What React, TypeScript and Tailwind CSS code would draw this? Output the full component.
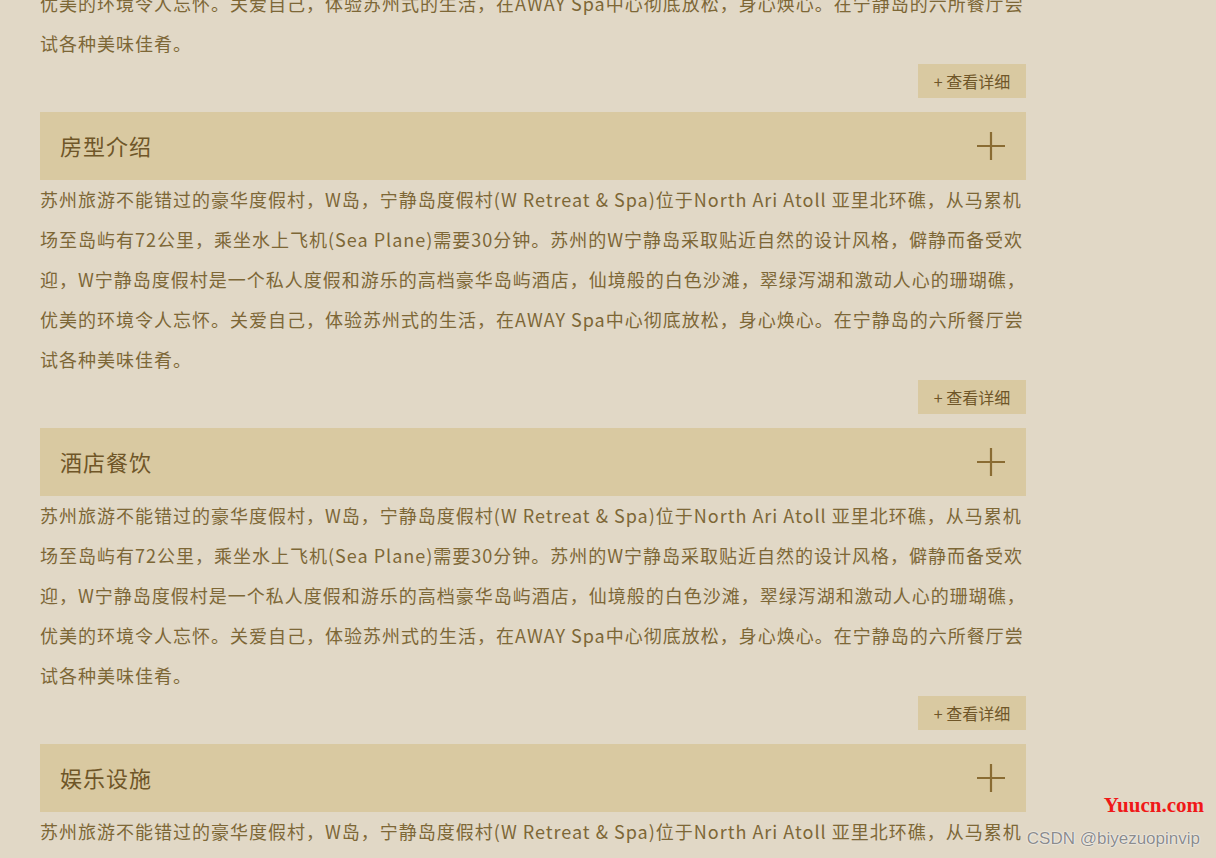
import React from "react";

const intro =
  "苏州旅游不能错过的豪华度假村，W岛，宁静岛度假村(W Retreat & Spa)位于North Ari Atoll 亚里北环礁，从马累机场至岛屿有72公里，乘坐水上飞机(Sea Plane)需要30分钟。苏州的W宁静岛采取贴近自然的设计风格，僻静而备受欢迎，W宁静岛度假村是一个私人度假和游乐的高档豪华岛屿酒店，仙境般的白色沙滩，翠绿泻湖和激动人心的珊瑚礁，优美的环境令人忘怀。关爱自己，体验苏州式的生活，在AWAY Spa中心彻底放松，身心焕心。在宁静岛的六所餐厅尝试各种美味佳肴。";

const sections = ["酒店介绍", "房型介绍", "酒店餐饮", "娱乐设施"];

function PlusIcon() {
  return (
    <svg width="30" height="30" viewBox="0 0 30 30" className="shrink-0">
      <path d="M1 15H29M15 1V29" stroke="#8a6c33" strokeWidth="2.2" fill="none" />
    </svg>
  );
}

function Section({ title }: { title: string }) {
  return (
    <div className="mb-[14px]">
      {/* Header */}
      <div className="h-[68px] bg-[#d9c9a1] flex items-center justify-between pl-5 pr-[20px]">
        <h2 className="text-[22px] leading-none tracking-[1px] text-[#6f5628] mb-[3px]">{title}</h2>
        <PlusIcon />
      </div>

      {/* Body */}
      <p className="text-[18px] leading-[40px] tracking-[1px] text-[#7d6736] -mt-px mb-px">{intro}</p>

      <div className="flex justify-end">
        <button className="h-[34px] w-[108px] bg-[#d9c9a1] text-[16px] text-[#6f5628] flex items-center justify-center">
          + 查看详细
        </button>
      </div>
    </div>
  );
}

export default function App() {
  return (
    <div
      className="relative h-[858px] overflow-hidden bg-[#e1d8c6]"
      style={{ fontFamily: '"Noto Sans CJK SC", "Noto Sans", sans-serif' }}
    >
      <div className="w-[986px] ml-10 -mt-[204px]">
        {sections.map((s) => (
          <Section key={s} title={s} />
        ))}
      </div>

      {/* Watermarks */}
      <div
        className="absolute right-[12px] top-[790px] text-[21px] font-bold text-[#f01818]"
        style={{ fontFamily: '"Liberation Serif", serif' }}
      >
        Yuucn.com
      </div>
      <div
        className="absolute right-[16px] top-[826px] text-[17px] text-[#8c8c8c] [text-shadow:0_0_2px_#fff,0_0_1px_#fff]"
        style={{ fontFamily: '"Liberation Sans", sans-serif' }}
      >
        CSDN @biyezuopinvip
      </div>
    </div>
  );
}
